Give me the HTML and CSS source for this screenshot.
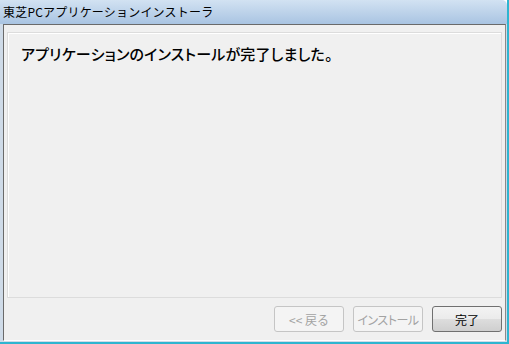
FILE: index.html
```html
<!DOCTYPE html>
<html lang="ja">
<head>
<meta charset="utf-8">
<link rel="stylesheet" href="styles.css">
</head>
<body>
<div class="window">
  <div class="titlebar"><span class="title">東芝PCアプリケーションインストーラ</span></div>
  <div class="frame">
    <div class="client">
      <div class="panel">
        <p class="message">アプリケーションのインストールが完了しました。</p>
      </div>
      <div class="buttons">
        <button class="btn" disabled>&lt;&lt; 戻る</button>
        <button class="btn tight" disabled>インストール</button>
        <button class="btn primary">完了</button>
      </div>
    </div>
  </div>
</div>
</body>
</html>
```
FILE: styles.css
```css
html, body {
  margin: 0;
  padding: 0;
  background: #ffffff;
}
.window {
  width: 509px;
  height: 344px;
  display: flex;
  flex-direction: column;
  font-family: "Noto Sans CJK JP", "Noto Sans", sans-serif;
  box-sizing: border-box;
  border-right: 2px solid #2eb5d0;
  border-bottom: 2px solid #2eb5d0;
}
.titlebar {
  height: 24px;
  flex: none;
  background: linear-gradient(#d2e2f2, #a9c4e2);
  display: flex;
  align-items: center;
  padding-left: 3px;
  border-top-right-radius: 5px;
}
.title {
  font-size: 12px;
  color: #000;
  letter-spacing: 0.2px;
  line-height: 14px;
}
.frame {
  flex: 1;
  display: flex;
  background: #cfdbe8;
  padding-left: 3px;
  padding-right: 1px;
  padding-bottom: 1px;
}
.client {
  flex: 1;
  display: flex;
  flex-direction: column;
  background: #f0f0f0;
  border-top: 1px solid #6a6a6a;
  border-left: 1px solid #6a6a6a;
  border-right: 1px solid #8a8a8a;
  border-bottom: 1px solid #ffffff;
  padding: 7px 3px 0 3px;
}
.panel {
  height: 266px;
  border: 1px solid #dcdcdc;
  box-shadow: inset 1px 1px 0 #ffffff;
  box-sizing: border-box;
}
.message {
  margin: 12px 0 0 13px;
  font-size: 15px;
  line-height: 18px;
  font-feature-settings: "palt";
  letter-spacing: 0.2px;
  color: #000;
  font-weight: 500;
}
.buttons {
  display: flex;
  justify-content: flex-end;
  gap: 9px;
  margin-top: 8px;
}
.btn {
  width: 70px;
  height: 26px;
  font-family: "Noto Sans CJK JP", sans-serif;
  font-size: 12px;
  padding: 0;
  white-space: nowrap;
  border-radius: 3px;
  border: 1px solid #707070;
  background: linear-gradient(#f3f3f3 0%, #ebebeb 50%, #dddddd 51%, #cfcfcf 100%);
  color: #000;
}
.tight {
  font-feature-settings: "palt";
  letter-spacing: -0.5px;
}
.btn:disabled {
  border-color: #c5c5c5;
  background: #f4f4f4;
  color: #a3a3a3;
}
```
